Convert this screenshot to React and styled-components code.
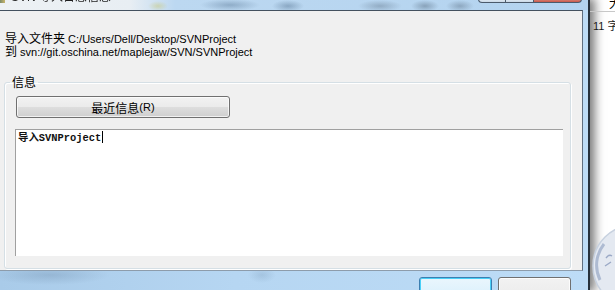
import React from "react";
import styled, { createGlobalStyle } from "styled-components";

const GlobalStyle = createGlobalStyle`
  html, body {
    margin: 0;
    padding: 0;
    background: #ffffff;
  }
  body {
    font-family: "Liberation Sans", "Noto Sans CJK SC", sans-serif;
    font-size: 11px;
    color: #000;
  }
`;

const App = () => {
  return (
    <Screen>
      <GlobalStyle />
      <DialogWindow>
        <TitleBar>
          <TitleIcon />
          <TitleText>SVN 导入日志信息</TitleText>
          <CaptionButtons>
            <CaptionButton $w={26} />
            <CaptionButton $w={27} />
            <CaptionButton $w={47} $close />
          </CaptionButtons>
        </TitleBar>
        <Body>
          <Client>
            <InfoText>
              <InfoLine>
                <Han>导入文件夹</Han> C:/Users/Dell/Desktop/SVNProject
              </InfoLine>
              <InfoLine>
                <Han>到</Han> svn://git.oschina.net/maplejaw/SVN/SVNProject
              </InfoLine>
            </InfoText>
            <GroupBox>
              <Legend>
                <Han>信息</Han>
              </Legend>
              <RecentButton>
                <Han>最近信息</Han>(R)
              </RecentButton>
              <MessageBox>
                导入SVNProject
                <Caret />
              </MessageBox>
            </GroupBox>
          </Client>
        </Body>
        <BottomFrame>
          <FrameButton $primary />
          <FrameButton />
        </BottomFrame>
      </DialogWindow>
      <BehindWindow>
        <BehindHeader>大</BehindHeader>
        <BehindRow>11 字</BehindRow>
        <Logo width="25" height="62" viewBox="0 0 25 62">
          <circle cx="44" cy="38" r="41" fill="#e4e9f1" stroke="#c7d1df" strokeWidth="1.5" />
          <path d="M14 16 A34 34 0 0 0 10 52" fill="none" stroke="#aebbd2" strokeWidth="3" />
          <path d="M16 30 q3 -4 6 -2 M15 38 l6 -4" fill="none" stroke="#9aa9c6" strokeWidth="1.4" />
        </Logo>
      </BehindWindow>
    </Screen>
  );
};

export default App;

const Screen = styled.div`
  width: 615px;
  height: 290px;
  display: flex;
  overflow: hidden;
  background: #ffffff;
`;

const DialogWindow = styled.div`
  width: 588px;
  flex: none;
  display: flex;
  flex-direction: column;
  background: linear-gradient(90deg, #a9cbe9 0, #b6d6f2 40%, #bddcf6 100%);
  border-right: 2px solid #26313c;
  box-shadow: 3px 0 9px 2px rgba(20, 20, 20, 0.55);
`;

const TitleBar = styled.div`
  height: 10px;
  flex: none;
  display: flex;
  align-items: flex-start;
  overflow: hidden;
  background:
    radial-gradient(ellipse 30px 6px at 230px 5px, rgba(90, 120, 150, 0.45), transparent),
    radial-gradient(ellipse 16px 6px at 288px 6px, rgba(80, 110, 140, 0.45), transparent),
    radial-gradient(ellipse 22px 6px at 380px 6px, rgba(90, 110, 130, 0.4), transparent),
    radial-gradient(ellipse 14px 6px at 425px 6px, rgba(80, 100, 120, 0.45), transparent),
    radial-gradient(ellipse 14px 6px at 460px 6px, rgba(80, 100, 120, 0.4), transparent),
    radial-gradient(ellipse 10px 5px at 158px 6px, rgba(200, 200, 120, 0.5), transparent),
    linear-gradient(90deg, #edf1f4 0, #e8eef3 130px, #bcd8f1 175px, #b3d3ef 100%);
`;

const TitleIcon = styled.div`
  width: 5px;
  height: 3px;
  margin-right: 6px;
  background: linear-gradient(90deg, #7d8d6a, #c9b46a);
`;

const TitleText = styled.div`
  margin-top: -9px;
  font-size: 12px;
  line-height: 12px;
  color: #1e1e1e;
  filter: blur(0.5px);
  white-space: nowrap;
`;

const CaptionButtons = styled.div`
  margin-left: auto;
  margin-right: 6px;
  display: flex;
  margin-top: -1px;
`;

const CaptionButton = styled.div`
  width: ${(p) => p.$w}px;
  height: 3px;
  border: 1px solid #4b5a6b;
  border-top: none;
  margin-left: -1px;
  border-radius: ${(p) => (p.$close ? "0 0 4px 0" : "0")};
  background: ${(p) =>
    p.$close
      ? "linear-gradient(180deg, #d98a7c, #c8584a)"
      : "linear-gradient(180deg, #e6eef6, #c9d8e6)"};
  &:first-child {
    border-radius: 0 0 0 4px;
  }
`;

const Body = styled.div`
  display: flex;
  flex: none;
  padding-right: 5px;
`;

const Client = styled.div`
  flex: 1;
  height: 261px;
  box-sizing: border-box;
  display: flex;
  flex-direction: column;
  background: #f0f0f0;
  border-top: 1px solid #44515f;
  border-right: 1px solid #5f6f80;
  border-bottom: 1px solid #8d9cab;
  padding-top: 20px;
  padding-bottom: 1px;
`;

const Han = styled.span`
  font-family: "Noto Sans CJK SC", sans-serif;
  font-size: 12px;
`;

const InfoText = styled.div`
  padding-left: 5px;
  white-space: nowrap;
`;

const InfoLine = styled.div`
  height: 13px;
  line-height: 13px;
`;

const GroupBox = styled.fieldset`
  flex: 1;
  margin: 18px 11px 0 4px;
  padding: 6px 7px 12px 11px;
  border: 1px solid #d5dfe5;
  border-radius: 3px;
  box-shadow: inset 1px 1px 0 #ffffff, 1px 1px 0 #ffffff;
  display: flex;
  flex-direction: column;
  min-width: 0;
`;

const Legend = styled.legend`
  margin-left: -6px;
  padding: 0 2px;
  line-height: 13px;
`;

const RecentButton = styled.div`
  width: 212px;
  height: 20px;
  flex: none;
  display: flex;
  align-items: center;
  justify-content: center;
  border: 1px solid #707070;
  border-radius: 3px;
  background: linear-gradient(180deg, #f2f2f2 0, #ebebeb 48%, #dddddd 52%, #cfcfcf 100%);
  box-shadow: inset 0 0 0 1px rgba(255, 255, 255, 0.7);
  font-size: 11px;
  line-height: 13px;
`;

const MessageBox = styled.div`
  flex: 1;
  margin-top: 11px;
  margin-left: -1px;
  padding: 1px 2px;
  background: #ffffff;
  border-top: 1px solid #a0a0a0;
  border-left: 1px solid #a0a0a0;
  font-family: "Liberation Mono", "Noto Sans CJK SC", monospace;
  font-size: 10.4px;
  font-weight: bold;
  line-height: 12px;
  color: #111;
  white-space: nowrap;
`;

const Caret = styled.span`
  display: inline-block;
  width: 1px;
  height: 12px;
  margin-left: 1px;
  vertical-align: -2px;
  background: #000;
`;

const BottomFrame = styled.div`
  flex: 1;
  display: flex;
  justify-content: flex-end;
  align-items: flex-start;
  gap: 6px;
  padding: 6px 17px 0 0;
  overflow: hidden;
  background:
    radial-gradient(ellipse 60px 10px at 50px 4px, rgba(110, 140, 170, 0.35), transparent),
    radial-gradient(ellipse 14px 8px at 262px 4px, rgba(110, 140, 170, 0.25), transparent);
`;

const FrameButton = styled.div`
  width: 71px;
  height: 20px;
  flex: none;
  border: 1px solid ${(p) => (p.$primary ? "#3c7fb1" : "#707070")};
  border-radius: 3px;
  background: ${(p) =>
    p.$primary
      ? "linear-gradient(180deg, #eaf6fd, #d9f0fc)"
      : "linear-gradient(180deg, #f2f2f2, #ebebeb)"};
  box-shadow: inset 0 0 0 1px ${(p) => (p.$primary ? "#48d0f8" : "#fcfcfc")};
`;

const BehindWindow = styled.div`
  flex: 1;
  display: flex;
  flex-direction: column;
  min-width: 0;
`;

const BehindHeader = styled.div`
  height: 11px;
  flex: none;
  overflow: hidden;
  padding-left: 19px;
  border-bottom: 1px solid #c8c8c8;
  font-family: "Noto Sans CJK SC", sans-serif;
  font-size: 12px;
  line-height: 5px;
  white-space: nowrap;
`;

const BehindRow = styled.div`
  padding: 8px 0 0 3px;
  font-size: 11px;
  line-height: 13px;
  white-space: nowrap;
  color: #1a1a1a;
`;

const Logo = styled.svg`
  display: block;
  margin-top: auto;
  flex: none;
`;
